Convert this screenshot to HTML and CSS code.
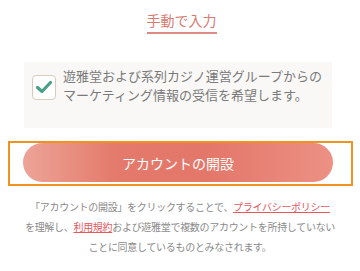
FILE: index.html
```html
<!DOCTYPE html>
<html lang="ja">
<head>
<meta charset="utf-8">
<link rel="stylesheet" href="styles.css">
</head>
<body>
<div class="page">
  <div class="tab-row">
    <span class="tab">手動で入力</span>
  </div>
  <div class="consent">
    <span class="checkbox">
      <svg width="18" height="14" viewBox="0 0 18 14"><path d="M2.5 7.5 L7 11.5 L15.5 2.5" fill="none" stroke="#4a9f86" stroke-width="3.2" stroke-linecap="round" stroke-linejoin="round"/></svg>
    </span>
    <p class="consent-text">遊雅堂および系列カジノ運営グループからのマーケティング情報の受信を希望します。</p>
  </div>
  <div class="focus-ring">
    <button class="cta">アカウントの開設</button>
  </div>
  <p class="notice">「アカウントの開設」をクリックすることで、<a class="link">プライバシーポリシー</a><br>を理解し、<a class="link">利用規約</a>および遊雅堂で複数のアカウントを所持していない<br>ことに同意しているものとみなされます。</p>
</div>
</body>
</html>
```

FILE: styles.css
```css
html, body {
  margin: 0;
  padding: 0;
  background: #ffffff;
}
body {
  font-family: "Noto Sans CJK JP", "Noto Sans", sans-serif;
  width: 360px;
  height: 271px;
  overflow: hidden;
}
.page {
  padding-top: 10px;
}
.tab-row {
  display: flex;
  justify-content: center;
}
.tab {
  display: inline-block;
  font-size: 14px;
  line-height: 20px;
  color: #d97a70;
  padding-bottom: 2px;
  border-bottom: 2px solid #dc8b82;
  margin-left: 3px;
}
.consent {
  margin: 28px 28px 0 24px;
  background: #f9f8f6;
  display: flex;
  align-items: center;
  padding: 4px 8px 24px 8px;
  gap: 7px;
}
.checkbox {
  flex: none;
  width: 22px;
  height: 23px;
  border: 1px solid #d9cabb;
  border-radius: 4px;
  background: #ffffff;
  display: flex;
  align-items: center;
  justify-content: center;
  margin-top: 4px;
}
.consent-text {
  margin: 0;
  font-size: 13px;
  line-height: 19px;
  color: #7a7a7a;
  letter-spacing: 0;
}
.focus-ring {
  margin: 13px 7px 0 8px;
  border: 2px solid #f0921f;
  padding: 0 18px 2px 13px;
}
.cta {
  display: block;
  width: 100%;
  height: 39px;
  border: none;
  border-radius: 20px;
  background: linear-gradient(90deg, #eca497 0%, #e47a6b 30%, #e3776a 60%, #ec9184 100%);
  color: #ffffff;
  font-family: "Noto Sans CJK JP", "Noto Sans", sans-serif;
  font-size: 14px;
  padding: 0;
}
.notice {
  margin: 11px 0 0 0;
  text-align: center;
  font-size: 10px;
  line-height: 20px;
  letter-spacing: -0.3px;
  color: #8a8a8a;
}
.link {
  color: #e2585e;
  text-decoration: underline;
}
```
